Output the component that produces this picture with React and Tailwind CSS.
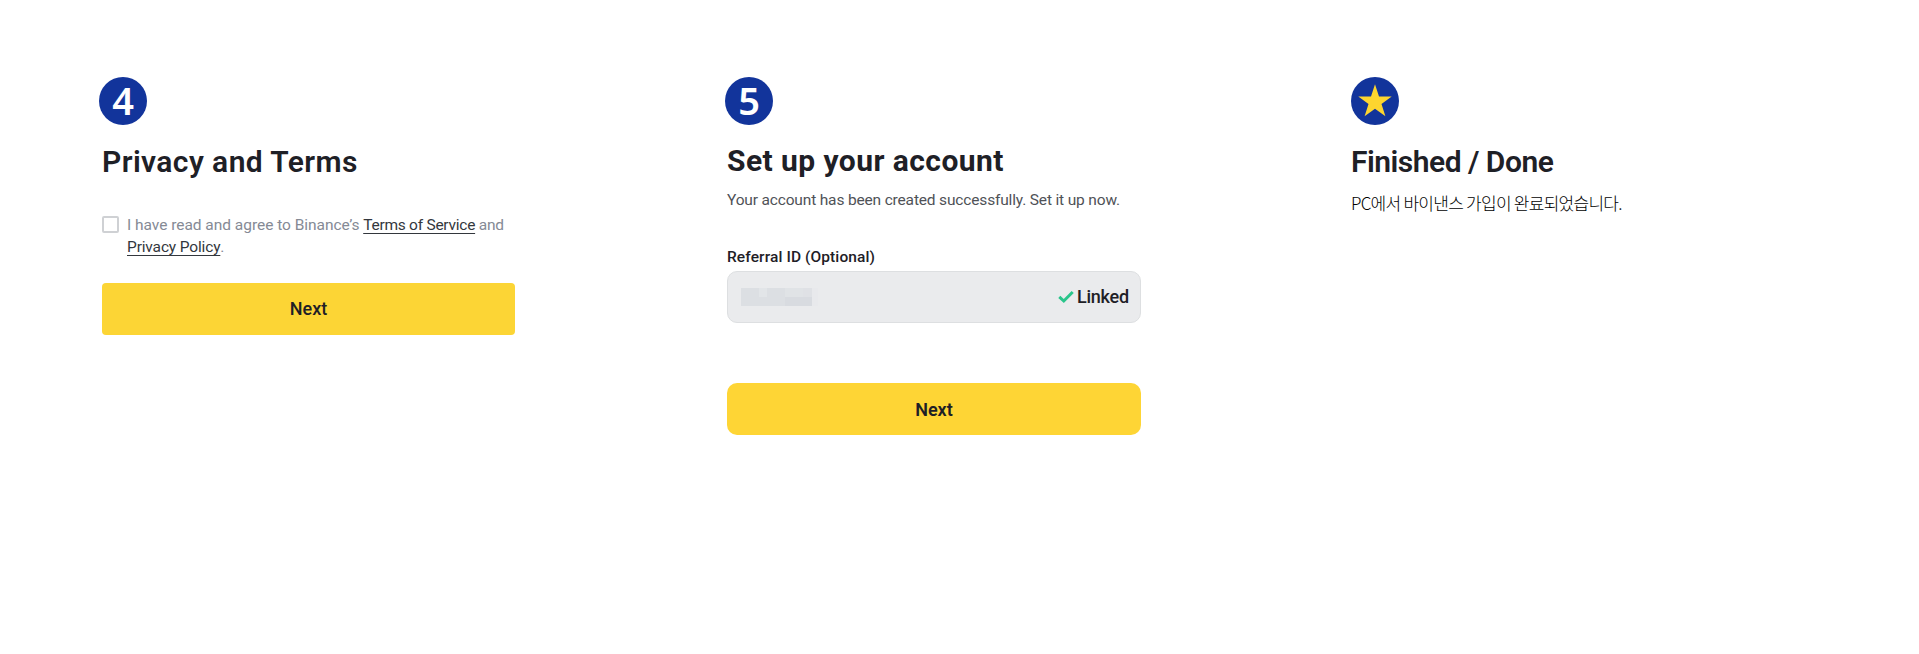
import React from "react";

function StepBadge({ children }) {
  return (
    <div className="flex h-[48px] w-[48px] items-center justify-center rounded-full bg-[#12349b] font-['Noto_Sans',sans-serif] text-[38px] leading-[48px] font-semibold text-white">
      {children}
    </div>
  );
}

function PrivacyStep() {
  return (
    <section className="w-[625px] pl-[99px]">
      <StepBadge>
        <span className="pb-[2px] leading-[46px]">4</span>
      </StepBadge>
      <h2 className="mt-[17px] ml-[3px] text-[30px] leading-[40px] font-semibold tracking-[0.42px] whitespace-nowrap">
        Privacy and Terms
      </h2>
      <div className="mt-[32px] ml-[3px] flex gap-[8px]">
        <span className="mt-[2px] h-[17px] w-[17px] shrink-0 rounded-[2px] border-2 border-[#cfd1d4] bg-white" />
        <p className="text-[15.5px] leading-[22px] tracking-[-0.25px] whitespace-nowrap text-[#858a95]">
          <span className="tracking-[-0.03px]">I have read and agree to Binance’s </span>
          <a className="text-[#33373d] underline decoration-1 underline-offset-[3px] [text-decoration-skip-ink:none]">Terms of Service</a> and
          <br />
          <a className="tracking-[-0.15px] text-[#33373d] underline decoration-1 underline-offset-[3px] [text-decoration-skip-ink:none]">Privacy Policy</a>.
        </p>
      </div>
      <button className="mt-[25px] ml-[3px] block h-[52px] w-[413px] rounded-[4px] bg-[#fcd535] text-[18px] leading-[52px] font-medium">
        Next
      </button>
    </section>
  );
}

function AccountStep() {
  return (
    <section className="w-[626px] pl-[100px]">
      <StepBadge>
        <span className="pb-[2px] leading-[46px]">5</span>
      </StepBadge>
      <h2 className="mt-[16px] ml-[2px] text-[30px] leading-[40px] font-bold tracking-[0.44px] whitespace-nowrap">
        Set up your account
      </h2>
      <p className="mt-[9px] ml-[2px] text-[15.5px] leading-[20px] tracking-[-0.16px] whitespace-nowrap text-[#4f5257]">
        Your account has been created successfully. Set it up now.
      </p>
      <label className="mt-[36px] ml-[2px] block text-[15.5px] leading-[22px] font-medium tracking-[0.1px]">
        Referral ID (Optional)
      </label>
      <div className="mt-[3px] ml-[2px] flex h-[52px] w-[414px] items-center justify-between rounded-[10px] border border-[#dddfe1] bg-[#eaebed] pr-[11px] pl-[13px]">
        <svg width="77" height="18" viewBox="0 0 77 18" shapeRendering="crispEdges">
          <rect width="71" height="18" fill="#dcdfe3" />
          <rect x="18" width="8" height="9" fill="#e2e5e8" />
          <rect x="44" width="18" height="9" fill="#e0e3e6" />
          <rect x="44" y="9" width="27" height="9" fill="#d8dbe0" />
          <rect x="62" width="9" height="9" fill="#dfe1e5" />
          <rect x="71" width="6" height="18" fill="#e8e9ec" />
        </svg>
        <span className="flex items-center gap-[3px] text-[18px] leading-[24px] font-medium tracking-[-0.2px]">
          <svg width="16" height="14" viewBox="0 0 16 14" fill="none" stroke="#2ac58b" strokeWidth="3">
            <path d="M1.3 6.8 L5.8 11 L14.7 2" />
          </svg>
          Linked
        </span>
      </div>
      <button className="mt-[60px] ml-[2px] block h-[52px] w-[414px] rounded-[10px] bg-[#fed535] pt-[1px] text-[18px] leading-[51px] font-semibold">
        Next
      </button>
    </section>
  );
}

function DoneStep() {
  return (
    <section className="w-[668px] pl-[100px]">
      <StepBadge>
        <svg width="48" height="48" viewBox="0 0 48 48">
          <path
            d="M24 7.3 L28 19.4 L40.7 19.4 L30.5 27 L34.4 39.3 L24 31.8 L13.6 39.3 L17.5 27 L7.3 19.4 L20 19.4 Z"
            fill="#fdd52f"
          />
        </svg>
      </StepBadge>
      <h2 className="mt-[17px] text-[30px] leading-[40px] font-semibold tracking-[-0.5px] whitespace-nowrap">
        Finished / Done
      </h2>
      <p className="mt-[9px] font-['Noto_Sans_CJK_KR',sans-serif] text-[17px] leading-[24px] font-light tracking-[-0.73px] whitespace-nowrap text-black">
        PC에서 바이낸스 가입이 완료되었습니다.
      </p>
    </section>
  );
}

export default function App() {
  return (
    <main className="flex h-[654px] w-[1919px] overflow-hidden bg-white pt-[77px] font-[Roboto,'Noto_Sans_CJK_KR',sans-serif] text-[#1e2026]">
      <PrivacyStep />
      <AccountStep />
      <DoneStep />
    </main>
  );
}
